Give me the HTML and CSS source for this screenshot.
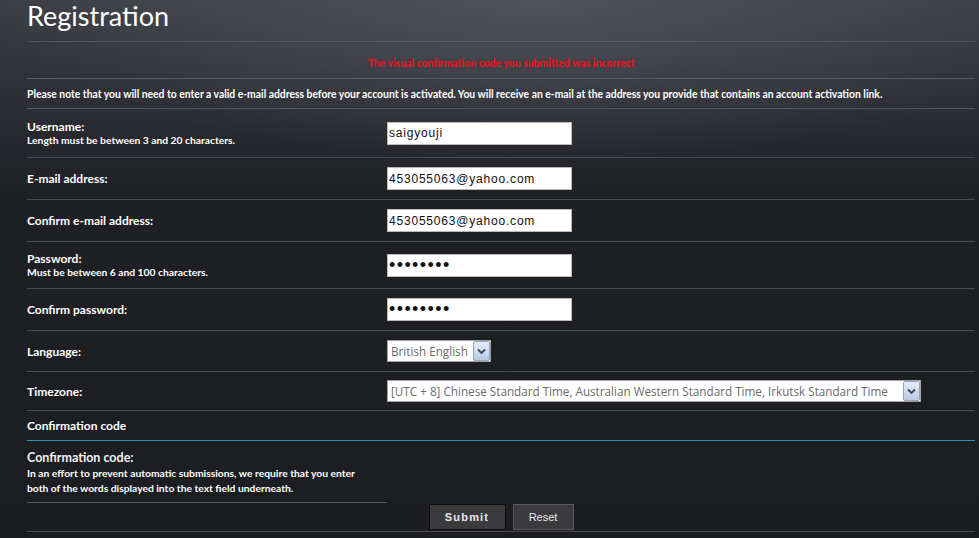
FILE: index.html
```html
<!DOCTYPE html>
<html lang="en">
<head>
  <meta charset="UTF-8" />
  <title>Registration</title>
  <link rel="stylesheet" href="styles.css">
</head>
<body>
  <div class="page">
    <h2 class="title">Registration</h2>

    <div class="panel">
      <p class="error">The visual confirmation code you submitted was incorrect</p>
      <p class="note">Please note that you will need to enter a valid e-mail address before your account is activated. You will receive an e-mail at the address you provide that contains an account activation link.</p>

      <fieldset class="fields">
        <dl class="row first">
          <dt><label>Username:</label><span class="explain">Length must be between 3 and 20 characters.</span></dt>
          <dd><input class="inputbox" type="text" value="saigyouji"></dd>
        </dl>
        <dl class="row">
          <dt><label>E-mail address:</label></dt>
          <dd><input class="inputbox" type="text" value="453055063@yahoo.com"></dd>
        </dl>
        <dl class="row">
          <dt><label>Confirm e-mail address:</label></dt>
          <dd><input class="inputbox" type="text" value="453055063@yahoo.com"></dd>
        </dl>
        <dl class="row">
          <dt><label>Password:</label><span class="explain">Must be between 6 and 100 characters.</span></dt>
          <dd><input class="inputbox" type="password" value="12345678"></dd>
        </dl>
        <dl class="row">
          <dt><label>Confirm password:</label></dt>
          <dd><input class="inputbox" type="password" value="12345678"></dd>
        </dl>
        <dl class="row select-row">
          <dt><label>Language:</label></dt>
          <dd>
            <span class="select-wrap lang">
              <select><option>British English</option></select>
              <span class="arrow"><svg width="9" height="7" viewBox="0 0 9 7"><path d="M1 1.5 L4.5 5 L8 1.5" fill="none" stroke="#33455e" stroke-width="1.8"/></svg></span>
            </span>
          </dd>
        </dl>
        <dl class="row tz-row">
          <dt><label>Timezone:</label></dt>
          <dd>
            <span class="select-wrap tz">
              <select><option>[UTC + 8] Chinese Standard Time, Australian Western Standard Time, Irkutsk Standard Time</option></select>
              <span class="arrow"><svg width="9" height="7" viewBox="0 0 9 7"><path d="M1 1.5 L4.5 5 L8 1.5" fill="none" stroke="#33455e" stroke-width="1.8"/></svg></span>
            </span>
          </dd>
        </dl>
      </fieldset>

      <h3 class="subhead">Confirmation code</h3>

      <dl class="captcha">
        <dt><label>Confirmation code:</label><span class="explain">In an effort to prevent automatic submissions, we require that you enter both of the words displayed into the text field underneath.</span></dt>
      </dl>

      <div class="submit-row">
        <button class="button1">Submit</button>
        <button class="button2">Reset</button>
      </div>
    </div>
  </div>
</body>
</html>
```

FILE: styles.css
```css
* {
  margin: 0;
  padding: 0;
  box-sizing: border-box;
}
html, body {
  height: 100%;
}
body {
  background-color: #1c1d21;
  background-image:
    radial-gradient(ellipse 560px 160px at 55% 0, rgba(95, 97, 106, 0.6), rgba(95, 97, 106, 0) 100%),
    linear-gradient(to bottom, #3c3e45 0, #2c2d33 110px, #1f2024 200px, #1c1d21 100%);
  background-repeat: no-repeat;
  color: #fff;
  font-family: 'Lato', 'Liberation Sans', sans-serif;
  overflow: hidden;
}
.page {
  padding: 0 4px 0 27px;
}
.title {
  font-weight: normal;
  font-size: 27px;
  line-height: 32px;
  height: 42px;
  border-bottom: 1px solid rgba(110, 112, 120, 0.45);
  color: #fff;
}
.error {
  color: #e3141e;
  font-size: 10.4px;
  font-weight: 900;
  text-align: center;
  line-height: 14px;
  padding: 14px 0 8px;
  border-bottom: 1px solid #5a5b61;
}
.note {
  font-size: 10.35px;
  font-weight: bold;
  line-height: 14px;
  padding: 8px 0 7px;
  border-bottom: 1px solid #55565c;
}
.fields {
  border: none;
}
.row {
  display: flex;
  align-items: center;
  padding: 9px 0;
  border-bottom: 1px solid #4a4b50;
}
.row.first {
  padding: 10px 0 10px;
}
.select-row {
  padding: 9px 0 9px;
}
.tz-row {
  padding: 8px 0 8px;
}
.row dt {
  width: 360px;
  display: flex;
  flex-direction: column;
}
.row dd {
  display: flex;
}
.row dt label {
  font-size: 12px;
  font-weight: bold;
  line-height: 15px;
}
.explain {
  font-size: 10.3px;
  font-weight: bold;
  line-height: 13px;
}
.inputbox {
  width: 185px;
  height: 23px;
  border: 1px solid #b9b9b9;
  background: #fff;
  font-family: 'Liberation Sans', Arial, sans-serif;
  font-size: 12px;
  letter-spacing: 0.8px;
  color: #111;
  padding: 0 1px;
  outline: none;
}
.inputbox[type="password"] {
  font-size: 18px;
  letter-spacing: 1.4px;
}
.select-wrap {
  position: relative;
  display: flex;
  height: 22px;
}
.select-wrap select {
  appearance: none;
  -webkit-appearance: none;
  height: 22px;
  border: 1px solid #a5a5a5;
  background: #fff;
  color: #6a6a6a;
  font-family: 'Open Sans', 'Liberation Sans', sans-serif;
  font-size: 11.7px;
  padding: 0 19px 0 3px;
  outline: none;
}
.lang select {
  width: 104px;
}
.tz select {
  width: 534px;
}
.arrow {
  position: absolute;
  right: 1px;
  top: 1px;
  width: 17px;
  height: 20px;
  border: 1px solid #8ea3bd;
  border-radius: 2px;
  background: linear-gradient(to bottom, #e6eef8, #b9cbe2);
  display: flex;
  align-items: center;
  justify-content: center;
}
.subhead {
  font-size: 12px;
  font-weight: bold;
  line-height: 15px;
  padding: 7px 0 7px;
  border-bottom: 1px solid #3192b6;
}
.captcha dt {
  width: 360px;
  display: flex;
  flex-direction: column;
  padding: 9px 0 6px;
  border-bottom: 1px solid #55565c;
}
.captcha dt label {
  font-size: 12.5px;
  font-weight: bold;
  line-height: 16px;
  color: #f2f2f2;
}
.captcha .explain {
  font-size: 10.3px;
  line-height: 15px;
  max-width: 335px;
}
.submit-row {
  display: flex;
  justify-content: center;
  gap: 7px;
  padding: 1px 0 1px;
  border-bottom: 1px solid #4a4b50;
}
.button1, .button2 {
  height: 26px;
  background: #3b3b3d;
  color: #e8e8e8;
  font-family: 'Liberation Sans', Arial, sans-serif;
  font-size: 11px;
  border: 1px solid #5a5a5c;
}
.button1 {
  width: 77px;
  font-weight: bold;
  letter-spacing: 1.2px;
  border-color: #0d0d0e;
}
.button2 {
  width: 61px;
}
```
